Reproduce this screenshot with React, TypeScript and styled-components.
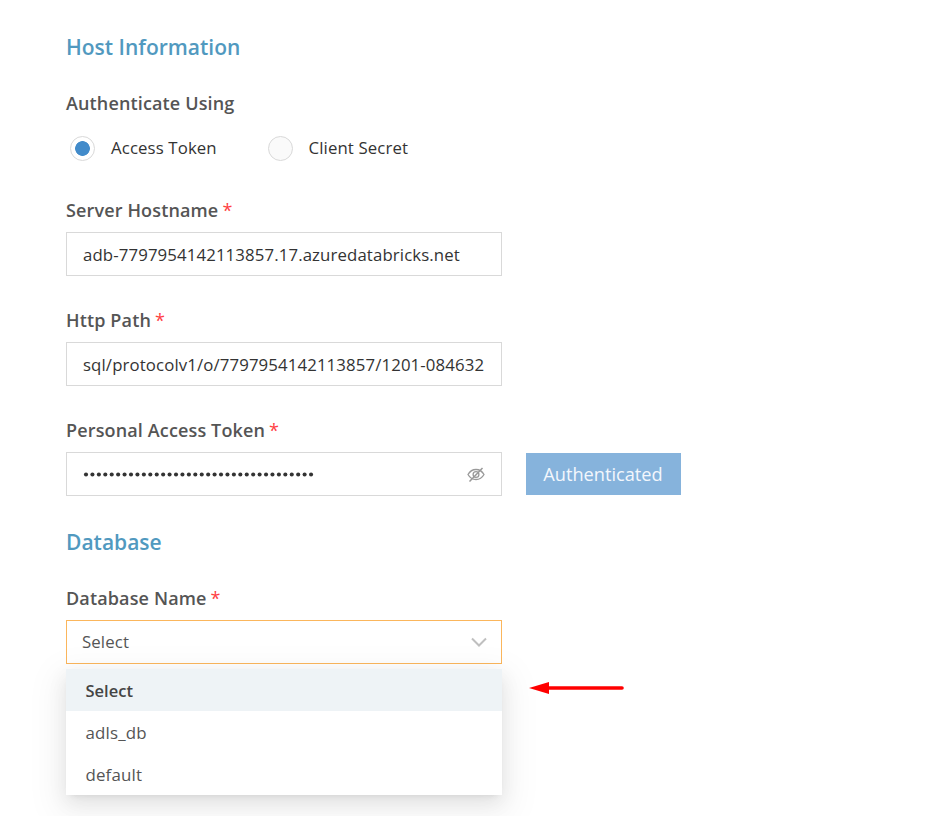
import React from "react";
import styled, { createGlobalStyle } from "styled-components";

const GlobalStyle = createGlobalStyle`
  * { box-sizing: border-box; }
  body { margin: 0; background: #fff; font-family: "Open Sans", sans-serif; }
`;

const Page = styled.main`
  height: 816px;
  padding: 35px 66px 0;
  overflow: hidden;
  background: #fff;
  white-space: nowrap;
`;

const Section = styled.section<{ $gap?: number }>`
  margin-top: ${(p) => p.$gap ?? 0}px;
`;

const Heading = styled.h2`
  margin: 0 0 32px;
  height: 24px;
  font-size: 21px;
  line-height: 25px;
  font-weight: 600;
  color: #5199bf;
`;

const Label = styled.label<{ $line?: number }>`
  display: flex;
  height: 24px;
  font-size: 18px;
  line-height: ${(p) => p.$line ?? 23}px;
  font-weight: 600;
  letter-spacing: 0.14px;
  color: #555;
`;

const Required = styled.span`
  margin-left: 4px;
  font-weight: 400;
  color: #ff4043;
`;

const Field = styled.div<{ $gap?: number }>`
  margin-bottom: ${(p) => p.$gap ?? 33}px;
`;

const RadioRow = styled.div`
  display: flex;
  height: 26px;
  margin: 20px 0 38px 4px;
`;

const Radio = styled.div<{ $width: number }>`
  display: flex;
  align-items: center;
  gap: 16px;
  width: ${(p) => p.$width}px;
  font-size: 16.8px;
  line-height: 22px;
  letter-spacing: 0.12px;
  color: #333;
`;

const RadioMark = styled.span<{ $checked?: boolean }>`
  width: 25px;
  height: 25px;
  border: 1.5px solid #d9d9d9;
  border-radius: 50%;
  background: ${(p) =>
    p.$checked ? "radial-gradient(circle, #428bca 7px, #fff 7.7px)" : "#fafafa"};
`;

const Row = styled.div`
  display: flex;
  gap: 23.5px;
  margin-top: 9px;
`;

const Box = styled.div<{ $active?: boolean }>`
  display: flex;
  align-items: center;
  justify-content: space-between;
  width: 436px;
  height: 44px;
  padding: ${(p) => (p.$active ? "0 14px 1px 15px" : "0 16px")};
  border: 1px solid ${(p) => (p.$active ? "#fbb65c" : "#d9d9d9")};
  background: #fff;
  font-size: 16.8px;
  letter-spacing: 0.12px;
  color: ${(p) => (p.$active ? "#555" : "#333")};
`;

const AuthButton = styled.button`
  width: 155px;
  height: 42px;
  margin-top: 1px;
  padding: 0;
  border: 0;
  background: #86b3dc;
  color: #f3f7fc;
  font: 400 18.2px/42px "Open Sans", sans-serif;
`;

const SelectArea = styled.div`
  position: relative;
  width: 620px;
  margin-top: 10px;
`;

const Menu = styled.ul`
  position: absolute;
  top: 49px;
  left: 0;
  width: 436px;
  margin: 0;
  padding: 0;
  list-style: none;
  border-radius: 2px;
  background: #fff;
  box-shadow: 0 4px 7px -5px rgba(0, 0, 0, 0.12), 0 7px 19px rgba(0, 0, 0, 0.08),
    0 11px 34px 10px rgba(0, 0, 0, 0.05);
`;

const Option = styled.li<{ $selected?: boolean }>`
  height: 42px;
  padding-left: 19.5px;
  font-size: ${(p) => (p.$selected ? 16.5 : 16.9)}px;
  line-height: 43px;
  font-weight: ${(p) => (p.$selected ? 600 : 400)};
  letter-spacing: ${(p) => (p.$selected ? 0 : 0.15)}px;
  color: ${(p) => (p.$selected ? "#444" : "#555")};
  background: ${(p) => (p.$selected ? "#eef3f6" : "#fff")};
`;

const Pointer = styled.svg`
  position: absolute;
  left: 463px;
  top: 60px;
`;

const EyeOff = () => (
  <svg width="18" height="16" viewBox="0 0 18 16" fill="none" stroke="#999" strokeWidth="1.3">
    <path d="M1 8.500C3 5 5.700 3.500 9 3.500s6 1.500 8 5c-2 3.500-4.700 5-8 5S3 12 1 8.500Z" />
    <circle cx="9" cy="8.500" r="2.900" />
    <path d="M2.500 15.500 15.500 2" strokeWidth="1.500" />
  </svg>
);

const Chevron = () => (
  <svg width="16" height="10" viewBox="0 0 16 10" fill="none" stroke="#bfbfbf" strokeWidth="2">
    <path d="m1 1.500 7 7 7-7" />
  </svg>
);

const fields = [
  { label: "Server Hostname", value: "adb-7797954142113857.17.azuredatabricks.net" },
  { label: "Http Path", value: "sql/protocolv1/o/7797954142113857/1201-084632" },
];

const Dots = () => (
  <svg width="232" height="6" viewBox="0 0 232 6" fill="#333">
    {Array.from({ length: 36 }, (_, i) => (
      <circle key={i} cx={3 + i * 6.43} cy="3.5" r="2.050" />
    ))}
  </svg>
);

export default function App() {
  return (
    <>
      <GlobalStyle />
      <Page>
        <Section>
          <Heading>Host Information</Heading>
          <Label $line={25}>Authenticate Using</Label>
          <RadioRow>
            <Radio $width={197.5}>
              <RadioMark $checked />
              Access Token
            </Radio>
            <Radio $width={160}>
              <RadioMark />
              Client Secret
            </Radio>
          </RadioRow>
          {fields.map((f) => (
            <Field key={f.label}>
              <Label>
                {f.label}
                <Required>*</Required>
              </Label>
              <Row>
                <Box>{f.value}</Box>
              </Row>
            </Field>
          ))}
          <Field $gap={0}>
            <Label>
              Personal Access Token
              <Required>*</Required>
            </Label>
            <Row>
              <Box>
                <Dots />
                <EyeOff />
              </Box>
              <AuthButton>Authenticated</AuthButton>
            </Row>
          </Field>
        </Section>
        <Section $gap={34}>
          <Heading>Database</Heading>
          <Label $line={25}>
            Database Name
            <Required>*</Required>
          </Label>
          <SelectArea>
            <Box $active>
              Select
              <Chevron />
            </Box>
            <Menu>
              <Option $selected>Select</Option>
              <Option>adls_db</Option>
              <Option>default</Option>
            </Menu>
            <Pointer width="96" height="16" viewBox="0 0 96 16">
              <path d="M18 8H93" stroke="#f00" strokeWidth="3.600" strokeLinecap="round" />
              <path d="m0 8 20-6v12Z" fill="#f00" />
            </Pointer>
          </SelectArea>
        </Section>
      </Page>
    </>
  );
}
